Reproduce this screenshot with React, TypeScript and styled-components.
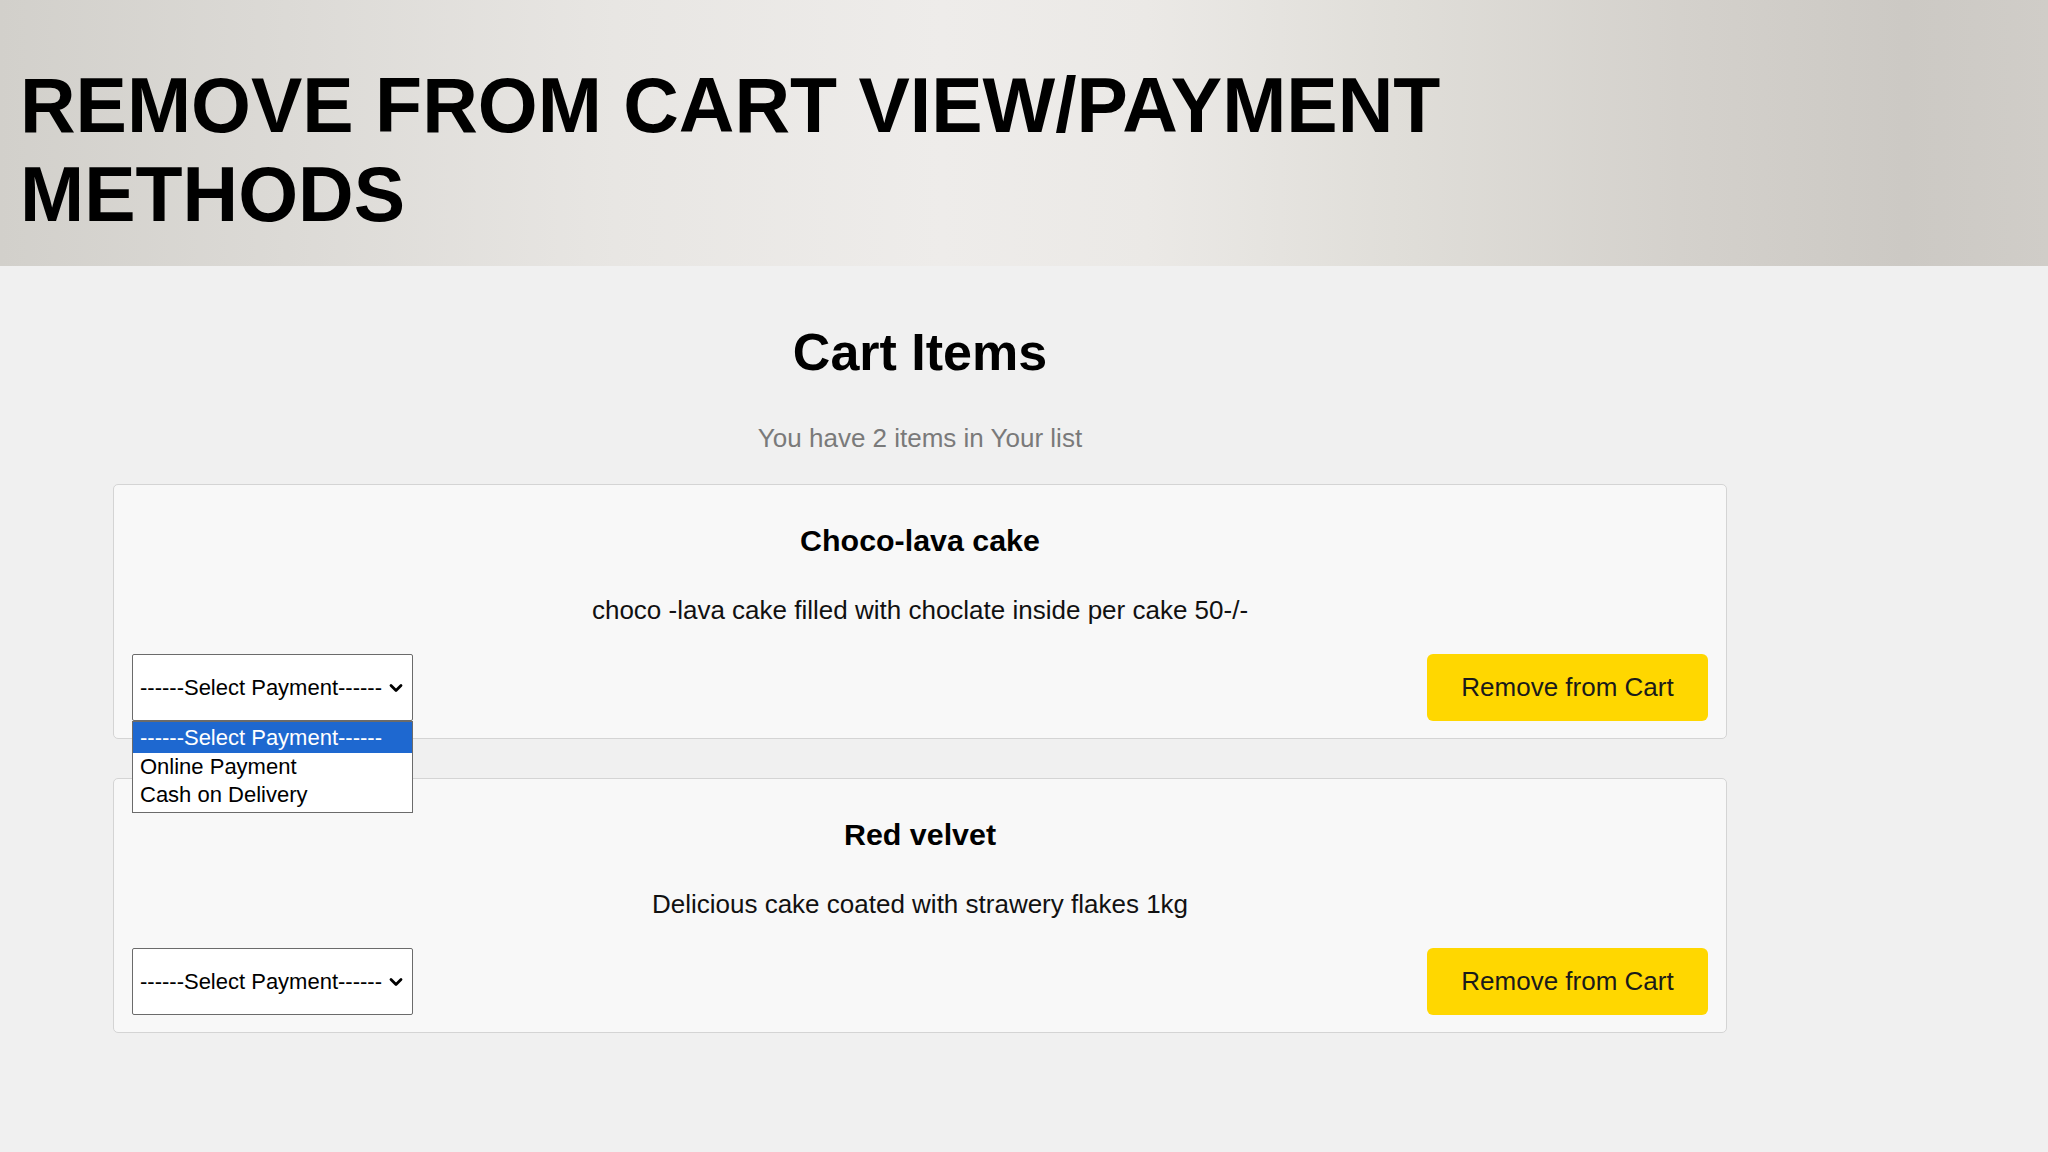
import React from "react";
import styled, { createGlobalStyle } from "styled-components";

const cartItems = [
  {
    id: 1,
    name: "Choco-lava cake",
    description: "choco -lava cake filled with choclate inside per cake 50-/-",
    open: true,
  },
  {
    id: 2,
    name: "Red velvet",
    description: "Delicious cake coated with strawery flakes 1kg",
    open: false,
  },
];

const paymentOptions = ["------Select Payment------", "Online Payment", "Cash on Delivery"];

const GlobalStyle = createGlobalStyle`
  html, body {
    margin: 0;
    padding: 0;
  }

  body {
    min-height: 100vh;
    background: #f0f0f0;
    font-family: "Liberation Sans", Arial, sans-serif;
    color: #000000;
  }

  * {
    box-sizing: border-box;
  }
`;

const SlideHeader = styled.header`
  height: 266px;
  padding: 61px 0 0 20px;
  background: linear-gradient(
    90deg,
    #d2d0cb 0%,
    #dcdad6 14%,
    #e8e6e3 30%,
    #eeecea 46%,
    #ebe9e6 56%,
    #e0ded9 68%,
    #d4d1cc 82%,
    #ccc9c4 93%,
    #d0cdc8 100%
  );

  h1 {
    margin: 0;
    font-size: 77px;
    line-height: 89px;
    font-weight: 700;
    color: #000000;
  }
`;

const CartSection = styled.main`
  width: 1614px;
  margin-left: 113px;
  padding-bottom: 40px;
`;

const CartTitle = styled.h2`
  margin: 56px 0 0;
  text-align: center;
  font-size: 52px;
  line-height: 60px;
  font-weight: 700;
`;

const CartCount = styled.p`
  margin: 41px 0 0;
  text-align: center;
  font-size: 26px;
  line-height: 30px;
  color: #7a7a7a;
`;

const CardList = styled.div`
  display: flex;
  flex-direction: column;
  gap: 39px;
  margin-top: 31px;
`;

const ItemCard = styled.section`
  border: 1px solid #d4d4d4;
  border-radius: 5px;
  background: #f8f8f8;
  padding: 0 18px 17px;
  text-align: center;

  h3 {
    margin: 38px 0 0;
    font-size: 30.4px;
    line-height: 35px;
    font-weight: 700;
  }

  p {
    margin: 37px 0 0;
    font-size: 26px;
    line-height: 30px;
    color: #111111;
  }
`;

const ActionRow = styled.div`
  display: flex;
  align-items: center;
  justify-content: space-between;
  margin-top: 29px;
  height: 67px;
`;

const SelectWrap = styled.div`
  position: relative;
  width: 281px;
  height: 67px;
`;

const SelectBox = styled.div`
  display: flex;
  align-items: center;
  justify-content: space-between;
  width: 100%;
  height: 100%;
  padding: 0 9px 0 7px;
  border: 1px solid #6b6b6b;
  border-radius: 2px;
  background: #ffffff;
  font-size: 22px;
  color: #000000;
  text-align: left;
  cursor: pointer;

  svg {
    flex: none;
  }
`;

const OptionList = styled.ul`
  position: absolute;
  top: 67px;
  left: 0;
  z-index: 5;
  width: 281px;
  margin: 0;
  padding: 0 0 3px;
  list-style: none;
  border: 1px solid #6b6b6b;
  background: #ffffff;
  text-align: left;
`;

const OptionItem = styled.li<{ $active?: boolean }>`
  height: ${(p) => (p.$active ? "31px" : "28px")};
  padding: 0 7px;
  font-size: 22px;
  line-height: ${(p) => (p.$active ? "31px" : "28px")};
  background: ${(p) => (p.$active ? "#1e68d0" : "transparent")};
  color: ${(p) => (p.$active ? "#ffffff" : "#000000")};
  white-space: nowrap;
`;

const RemoveButton = styled.button`
  width: 281px;
  height: 67px;
  border: none;
  border-radius: 6px;
  background: #ffd700;
  color: #1a1a1a;
  font-family: "Liberation Sans", Arial, sans-serif;
  font-size: 26px;
  cursor: pointer;
`;

function Chevron() {
  return (
    <svg width="14" height="10" viewBox="0 0 14 10" aria-hidden="true">
      <path d="M2 2.5 L7 7.5 L12 2.5" fill="none" stroke="#000" strokeWidth="2.8" strokeLinecap="round" strokeLinejoin="round" />
    </svg>
  );
}

export default function App() {
  return (
    <>
      <GlobalStyle />
      <SlideHeader>
        <h1>
          REMOVE FROM CART VIEW/PAYMENT
          <br />
          METHODS
        </h1>
      </SlideHeader>

      <CartSection>
        <CartTitle>Cart Items</CartTitle>
        <CartCount>You have {cartItems.length} items in Your list</CartCount>

        <CardList>
          {cartItems.map((item) => (
            <ItemCard key={item.id}>
              <h3>{item.name}</h3>
              <p>{item.description}</p>
              <ActionRow>
                <SelectWrap>
                  <SelectBox>
                    <span>{paymentOptions[0]}</span>
                    <Chevron />
                  </SelectBox>
                  {item.open && (
                    <OptionList>
                      {paymentOptions.map((opt, i) => (
                        <OptionItem key={opt} $active={i === 0}>
                          {opt}
                        </OptionItem>
                      ))}
                    </OptionList>
                  )}
                </SelectWrap>
                <RemoveButton>Remove from Cart</RemoveButton>
              </ActionRow>
            </ItemCard>
          ))}
        </CardList>
      </CartSection>
    </>
  );
}
